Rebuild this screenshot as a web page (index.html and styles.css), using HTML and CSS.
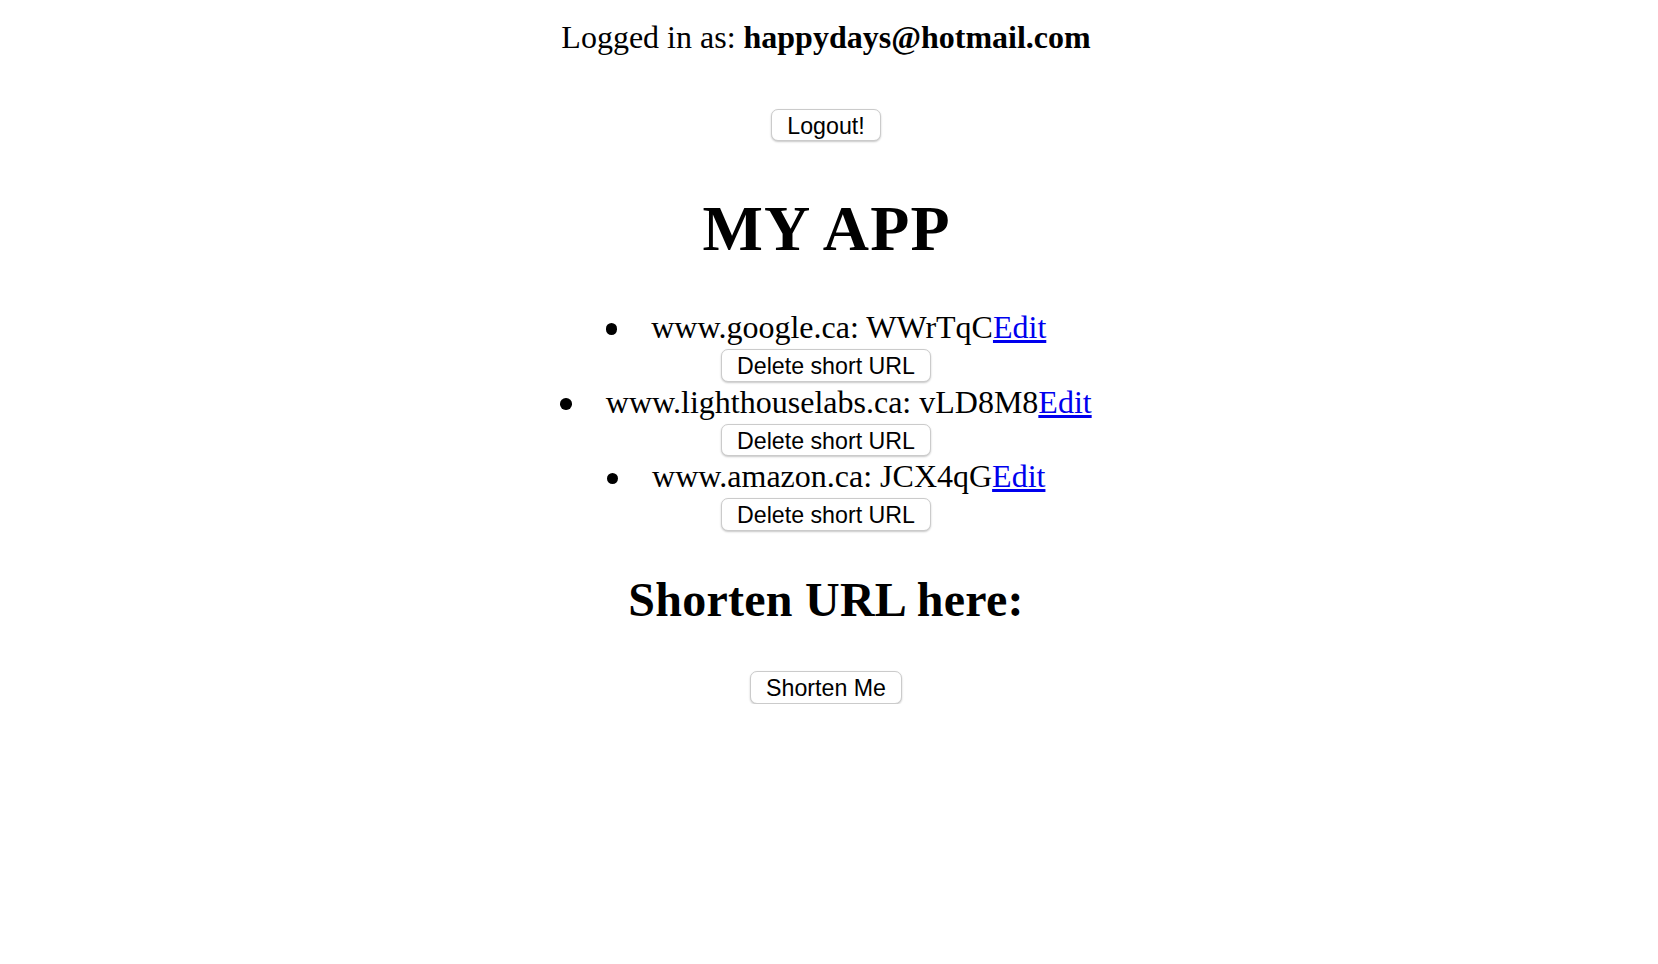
FILE: index.html
```html
<!DOCTYPE html>
<html lang="en">
<head>
<meta charset="utf-8">
<title>TinyApp</title>
<link rel="stylesheet" href="styles.css">
</head>
<body>
<header class="masthead">
  <div class="session">Logged in as: <b class="email">happydays@hotmail.com</b></div>
  <form class="action action-logout"><button type="button" class="btn">Logout!</button></form>
</header>
<main class="content">
  <h1 class="title">MY APP</h1>
  <ul class="url-list">
    <li class="url-item">
      <div class="url-line">www.google.ca: WWrTqC<a href="#" class="edit">Edit</a></div>
      <form class="action action-delete"><button type="button" class="btn">Delete short URL</button></form>
    </li>
    <li class="url-item">
      <div class="url-line">www.lighthouselabs.ca: vLD8M8<a href="#" class="edit">Edit</a></div>
      <form class="action action-delete"><button type="button" class="btn">Delete short URL</button></form>
    </li>
    <li class="url-item">
      <div class="url-line">www.amazon.ca: JCX4qG<a href="#" class="edit">Edit</a></div>
      <form class="action action-delete"><button type="button" class="btn">Delete short URL</button></form>
    </li>
  </ul>
  <h2 class="subtitle">Shorten URL here:</h2>
  <form class="action action-shorten"><button type="button" class="btn">Shorten Me</button></form>
</main>
</body>
</html>
```
FILE: styles.css
```css
html {
  background: #ffffff;
}

body {
  margin: 16px 22px 16px 16px;
  font-family: "Liberation Serif", "Times New Roman", serif;
  font-size: 32px;
  line-height: normal;
  color: #000000;
  text-align: center;
}

.session {
  margin: 2.5px 0 0;
}

.email {
  font-weight: bold;
}

.action {
  display: flex;
  justify-content: center;
  margin: 0;
}

.action-logout {
  margin-top: 53px;
}

.btn {
  font-family: "Liberation Sans", Arial, sans-serif;
  font-size: 23.2px;
  line-height: 26.4px;
  padding: 3px 15px 1px;
  border: 1px solid #cbcbcb;
  border-radius: 7px;
  background: #ffffff;
  color: #000000;
  box-shadow: 0 1px 2px rgba(0, 0, 0, 0.22);
  cursor: pointer;
}

.title {
  font-size: 64px;
  font-weight: bold;
  letter-spacing: 1.2px;
  text-indent: 1.2px;
  margin: 50.9px 0 0;
}

.url-list {
  list-style: none;
  margin: 43.2px 0 0;
  padding: 0;
}

.url-item {
  padding-bottom: 2px;
}

.url-line::before {
  content: "";
  display: inline-block;
  width: 11.5px;
  height: 11.5px;
  border-radius: 50%;
  background: #000000;
  margin-right: 34px;
  vertical-align: 3px;
}

.edit {
  color: #0000ee;
  text-decoration: underline;
}

.action-delete {
  margin-top: 3.2px;
}

.subtitle {
  font-size: 48px;
  font-weight: bold;
  letter-spacing: 0.25px;
  margin: 38.8px 0 0;
}

.action-shorten {
  margin-top: 44.6px;
}
```
